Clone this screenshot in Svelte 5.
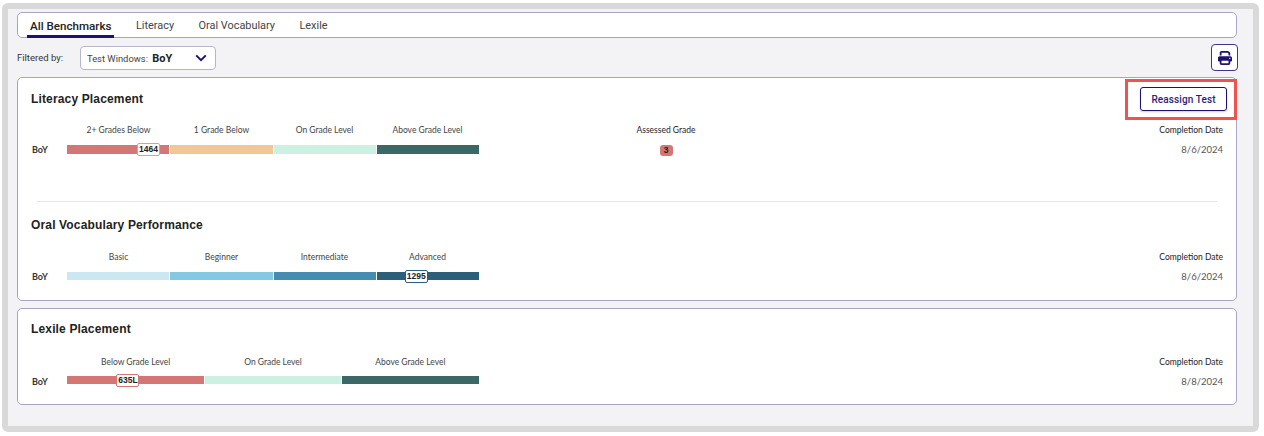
<script lang="ts">
	const red = '#d57676';
	const peach = '#f2c796';
	const mint = '#ccf0e1';
	const teal = '#3b6767';

	const sections = [
		{
			title: 'Literacy Placement',
			segments: [
				{ label: '2+ Grades Below', color: red },
				{ label: '1 Grade Below', color: peach },
				{ label: 'On Grade Level', color: mint },
				{ label: 'Above Grade Level', color: teal }
			],
			score: '1464',
			at: 17,
			border: '#e39a9a',
			grade: '3',
			date: '8/6/2024',
			reassign: true
		},
		{
			title: 'Oral Vocabulary Performance',
			segments: [
				{ label: 'Basic', color: '#cbe7f2' },
				{ label: 'Beginner', color: '#85c8e4' },
				{ label: 'Intermediate', color: '#448db0' },
				{ label: 'Advanced', color: '#2b5e78' }
			],
			score: '1295',
			at: 82,
			border: '#2b5e78',
			date: '8/6/2024'
		}
	];

	const lexile = {
		title: 'Lexile Placement',
		segments: [
			{ label: 'Below Grade Level', color: red },
			{ label: 'On Grade Level', color: mint },
			{ label: 'Above Grade Level', color: teal }
		],
		score: '635L',
		at: 12,
		border: red,
		date: '8/8/2024'
	};

	const tabs = ['All Benchmarks', 'Literacy', 'Oral Vocabulary', 'Lexile'];
</script>

{#snippet benchmark(s)}
	<div class="head">
		<h2>{s.title}</h2>
		{#if s.reassign}
			<button class="reassign">Reassign Test</button>
		{/if}
	</div>
	<div class="grid">
		<span></span>
		<div class="labels">
			{#each s.segments as seg}
				<span>{seg.label}</span>
			{/each}
		</div>
		<span class="strong center">{s.grade ? 'Assessed Grade' : ''}</span>
		<span class="strong right">Completion Date</span>

		<span class="strong window">BoY</span>
		<div class="bar">
			{#each s.segments as seg}
				<i style="background: {seg.color}"></i>
			{/each}
			<b class="score" style="left: {s.at}%; border-color: {s.border}">{s.score}</b>
		</div>
		<span class="center">
			{#if s.grade}
				<b class="grade">{s.grade}</b>
			{/if}
		</span>
		<span class="date right">{s.date}</span>
	</div>
{/snippet}

<div class="frame">
	<nav class="tabs">
		{#each tabs as tab, i}
			<span class="tab" class:active={i === 0}>{tab}</span>
		{/each}
	</nav>

	<div class="filters">
		<span class="filtered">Filtered by:</span>
		<div class="select">
			<span>Test Windows: <b>BoY</b></span>
			<svg width="12" height="8" viewBox="0 0 12 8">
				<path d="M1.2 1.4 6 6.2l4.8-4.8" fill="none" stroke="#1f1172" stroke-width="2" />
			</svg>
		</div>
		<button class="print" aria-label="Print">
			<svg width="14" height="14" viewBox="0 0 512 512">
				<path
					fill="#1f1172"
					d="M128 0C92.700 0 64 28.700 64 64v96h64V64h226.700L384 93.300V160h64V93.300c0-17-6.700-33.300-18.700-45.300L400 18.700C388 6.700 371.700 0 354.700 0H128zM384 352v96H128v-96h256zm64 32h32c17.700 0 32-14.300 32-32v-96c0-35.300-28.700-64-64-64H64c-35.300 0-64 28.700-64 64v96c0 17.700 14.300 32 32 32h32v64c0 35.300 28.700 64 64 64h256c35.300 0 64-28.700 64-64v-64zm-16-136a24 24 0 1 1 0 48 24 24 0 1 1 0-48z"
				/>
			</svg>
		</button>
	</div>

	<section class="card">
		<div class="block first">{@render benchmark(sections[0])}</div>
		<hr />
		<div class="block second">{@render benchmark(sections[1])}</div>
		<div class="highlight"></div>
	</section>

	<section class="card">
		<div class="block lexile">{@render benchmark(lexile)}</div>
	</section>
</div>

<style>
	:global(body) {
		background: #fff;
	}

	.frame {
		box-sizing: border-box;
		width: 1257px;
		height: 429px;
		margin: 3px 0 0 2px;
		padding: 3px 16px 0 9px;
		border: 6px solid #d9d9d9;
		border-radius: 6px;
		background: #f3f3f6;
		display: flex;
		flex-direction: column;
		font-family: Lato, sans-serif;
		color: #333;
	}

	.tabs {
		box-sizing: border-box;
		height: 26px;
		flex: none;
		display: flex;
		gap: 18.500px;
		padding-left: 9px;
		background: #fff;
		border: 1px solid #a7a4bf;
		border-radius: 5px;
		font-family: Roboto, sans-serif;
		font-size: 10.900px;
		line-height: 14px;
	}

	.tab {
		padding: 6px 3px 0;
		color: #444;
		margin-bottom: -1px;
	}

	.active {
		font-size: 11.600px;
		font-weight: 500;
		color: #222;
		border-bottom: 3px solid #1f1172;
	}

	.filters {
		height: 27px;
		margin-top: 6px;
		flex: none;
		display: flex;
		align-items: center;
		margin-right: -1px;
	}

	.filtered {
		font-family: Roboto, sans-serif;
		font-size: 9.5px;
		color: #333;
		width: 63px;
	}

	.select {
		box-sizing: border-box;
		width: 136px;
		height: 24px;
		margin-top: 1px;
		padding: 0 8px 0 6px;
		display: flex;
		align-items: center;
		justify-content: space-between;
		background: #fff;
		border: 1px solid #b7b5cb;
		border-radius: 4px;
		font-family: Roboto, sans-serif;
		font-size: 9.400px;
		color: #444;
	}

	.select b {
		margin-left: 2px;
		font-size: 11px;
		color: #222;
		font-weight: 700;
	}

	.print {
		box-sizing: border-box;
		margin-left: auto;
		width: 27px;
		height: 27px;
		padding: 0;
		display: flex;
		align-items: center;
		justify-content: center;
		background: #fff;
		border: 1px solid #3d3390;
		border-radius: 4px;
	}

	.card {
		position: relative;
		flex: none;
		background: #fff;
		border: 1px solid #a7a4bf;
		border-radius: 5px;
		margin-top: 7px;
	}

	.filters + .card {
		margin-top: 6px;
	}

	.block {
		padding: 0 13px;
	}

	.first {
		height: 123px;
	}

	.second {
		height: 98px;
	}

	.lexile {
		height: 95px;
	}

	hr {
		height: 1px;
		margin: 0 19px;
		border: 0;
		background: #e6e6e8;
	}

	.head {
		display: flex;
		align-items: flex-start;
		justify-content: space-between;
	}

	.first .head {
		height: 45px;
	}

	.second .head {
		height: 48px;
	}

	.lexile .head {
		height: 46px;
	}

	h2 {
		margin: 13px 0 0;
		font-family: 'Liberation Sans', sans-serif;
		font-size: 12px;
		line-height: 15px;
		font-weight: 700;
		letter-spacing: 0.15px;
		color: #222;
	}

	.first h2 {
		margin-top: 14px;
	}

	.second h2 {
		margin-top: 16px;
	}

	.reassign {
		box-sizing: border-box;
		width: 87px;
		height: 24px;
		margin: 9px -4px 0 0;
		padding: 0;
		background: #fff;
		border: 1px solid #1f1172;
		border-radius: 3px;
		box-shadow: 0 1px 2px rgba(0, 0, 0, 0.2);
		font-family: Roboto, sans-serif;
		font-size: 10px;
		font-weight: 500;
		letter-spacing: 0.1px;
		color: #2a2277;
	}

	.grid {
		display: grid;
		grid-template-columns: 36px 412px 374px 1fr;
		grid-template-rows: 14px 24px;
		align-items: center;
		font-size: 8.5px;
		color: #444;
	}

	.labels {
		display: flex;
	}

	.labels span {
		flex: 1;
		text-align: center;
	}

	.strong {
		color: #222;
	}

	.window {
		padding-left: 1px;
		font-weight: 700;
		font-size: 9px;
		color: #333;
	}

	.center {
		text-align: center;
	}

	.right {
		text-align: right;
	}

	.date {
		font-size: 9.5px;
		color: #555;
	}

	.bar {
		position: relative;
		display: flex;
		gap: 1px;
		height: 8px;
	}

	.first .bar {
		height: 9px;
	}

	.lexile .bar {
		margin-top: -2px;
	}

	.bar i {
		flex: 1;
	}

	.score {
		position: absolute;
		top: -2px;
		box-sizing: border-box;
		width: 23px;
		height: 13px;
		background: #fff;
		border: 1px solid;
		border-radius: 2px;
		font-family: 'Liberation Sans', sans-serif;
		font-size: 8.5px;
		line-height: 11px;
		text-align: center;
		color: #222;
	}

	.grade {
		display: inline-block;
		width: 13px;
		height: 11px;
		margin-top: 3px;
		background: #d57676;
		border-radius: 3px;
		font-family: 'Liberation Sans', sans-serif;
		font-size: 9px;
		font-weight: 700;
		line-height: 11px;
		color: #222;
		vertical-align: middle;
	}

	.highlight {
		position: absolute;
		top: 1px;
		right: -1px;
		width: 112px;
		height: 41px;
		box-sizing: border-box;
		border: 3px solid #ef5350;
		pointer-events: none;
	}
</style>
